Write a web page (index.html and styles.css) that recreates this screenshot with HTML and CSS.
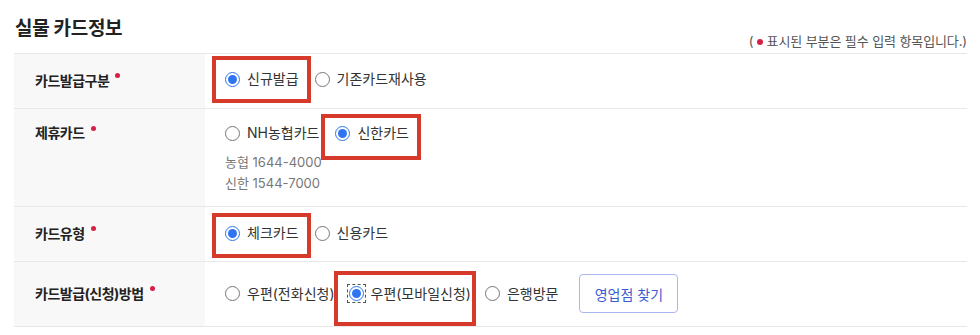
FILE: index.html
```html
<!DOCTYPE html>
<html lang="ko">
<head>
<meta charset="utf-8">
<link rel="stylesheet" href="styles.css">
</head>
<body>
<div class="page">
  <div class="head">
    <h2 class="title">실물 카드정보</h2>
    <p class="note">( <span class="req"></span> 표시된 부분은 필수 입력 항목입니다.)</p>
  </div>
  <div class="form">
    <div class="row r1">
      <div class="lbl">카드발급구분<span class="dot"></span></div>
      <div class="val">
        <div class="opts">
          <label class="opt mark m1"><input type="radio" name="a" checked><span>신규발급</span></label>
          <label class="opt"><input type="radio" name="a"><span>기존카드재사용</span></label>
        </div>
      </div>
    </div>
    <div class="row r2">
      <div class="lbl top">제휴카드<span class="dot"></span></div>
      <div class="val">
        <div class="opts">
          <label class="opt"><input type="radio" name="b"><span>NH농협카드</span></label>
          <label class="opt mark m2"><input type="radio" name="b" checked><span>신한카드</span></label>
        </div>
        <div class="phones">
          <p>농협 1644-4000</p>
          <p>신한 1544-7000</p>
        </div>
      </div>
    </div>
    <div class="row r3">
      <div class="lbl">카드유형<span class="dot"></span></div>
      <div class="val">
        <div class="opts">
          <label class="opt mark m3"><input type="radio" name="c" checked><span>체크카드</span></label>
          <label class="opt"><input type="radio" name="c"><span>신용카드</span></label>
        </div>
      </div>
    </div>
    <div class="row r4">
      <div class="lbl">카드발급(신청)방법<span class="dot"></span></div>
      <div class="val">
        <div class="opts">
          <label class="opt"><input type="radio" name="d"><span>우편(전화신청)</span></label>
          <label class="opt mark m4"><input class="focus" type="radio" name="d" checked><span>우편(모바일신청)</span></label>
          <label class="opt"><input type="radio" name="d"><span>은행방문</span></label>
          <button class="btn" type="button">영업점 찾기</button>
        </div>
      </div>
    </div>
  </div>
</div>
</body>
</html>
```

FILE: styles.css
```css
* { box-sizing: border-box; }
html, body { margin: 0; padding: 0; background: #fff; }
body {
  font-family: Inter, "Noto Sans CJK KR", sans-serif;
  color: #333;
}
.page { padding: 0 13px 0 14px; }
.head {
  display: flex;
  justify-content: space-between;
  align-items: flex-end;
  margin-top: 16px;
  padding-bottom: 3px;
}
.title {
  margin: 0 0 8px 1px;
  font-size: 19px;
  line-height: 26px;
  font-weight: 700;
  color: #222;
  letter-spacing: -0.3px;
}
.note {
  margin: 0;
  font-size: 13px;
  line-height: 18px;
  color: #555;
  letter-spacing: -0.1px;
}
.req {
  display: inline-block;
  width: 6px;
  height: 6px;
  border-radius: 50%;
  background: #d81f47;
  vertical-align: 1px;
}
.form { border-top: 1px solid #e8e8e8; }
.row {
  display: grid;
  grid-template-columns: 191px 1fr;
  border-bottom: 1px solid #e8e8e8;
}
.lbl {
  background: #f8f8f8;
  display: flex;
  align-items: center;
  padding-left: 21px;
  font-size: 14px;
  font-weight: 700;
  color: #222;
  line-height: 20px;
  letter-spacing: -0.5px;
}
.lbl.top { align-items: flex-start; padding-top: 14px; }
.dot {
  display: inline-block;
  width: 5px;
  height: 5px;
  border-radius: 50%;
  background: #d81f47;
  margin-left: 6px;
  align-self: center;
  margin-top: -11px;
}
.r2 .lbl .dot { align-self: flex-start; margin-top: 3px; }
.val { padding: 15px 0 19px 20px; }
.r2 .val { padding: 14px 0 12px 20px; }
.r3 .val { padding: 16px 0 18px 20px; }
.r4 .val { padding: 12px 0 13px 20px; }
.opts {
  display: flex;
  align-items: center;
  gap: 16px;
}
.r4 .opts { gap: 14px; }
.opt {
  position: relative;
  display: inline-flex;
  align-items: center;
  height: 20px;
  font-size: 14px;
  color: #333;
  line-height: 20px;
}
.opt input {
  margin: 0 7px 0 0;
  width: 15px;
  height: 15px;
  accent-color: #2f74f0;
}
.opt input.focus { outline: 1px dashed #555; outline-offset: 1px; }
.mark::after {
  content: "";
  position: absolute;
  border: 4px solid #d63a2b;
  pointer-events: none;
}
.m1::after { top: -13px; bottom: -14px; left: -13px; right: -12px; }
.m2::after { top: -9px; bottom: -17px; left: -14px; right: -12px; }
.m3::after { top: -10px; bottom: -15px; left: -13px; right: -12px; }
.m4::after { top: -13px; bottom: -22px; left: -15px; right: -5px; }
.phones { margin-top: 9px; }
.phones p {
  margin: 0;
  font-size: 13px;
  line-height: 21px;
  color: #777;
}
.btn {
  margin-left: 7px;
  height: 39px;
  width: 99px;
  padding: 0;
  border: 1px solid #a9b6f0;
  border-radius: 4px;
  background: #fff;
  color: #3d5bd1;
  font-family: inherit;
  font-size: 14px;
}
```
